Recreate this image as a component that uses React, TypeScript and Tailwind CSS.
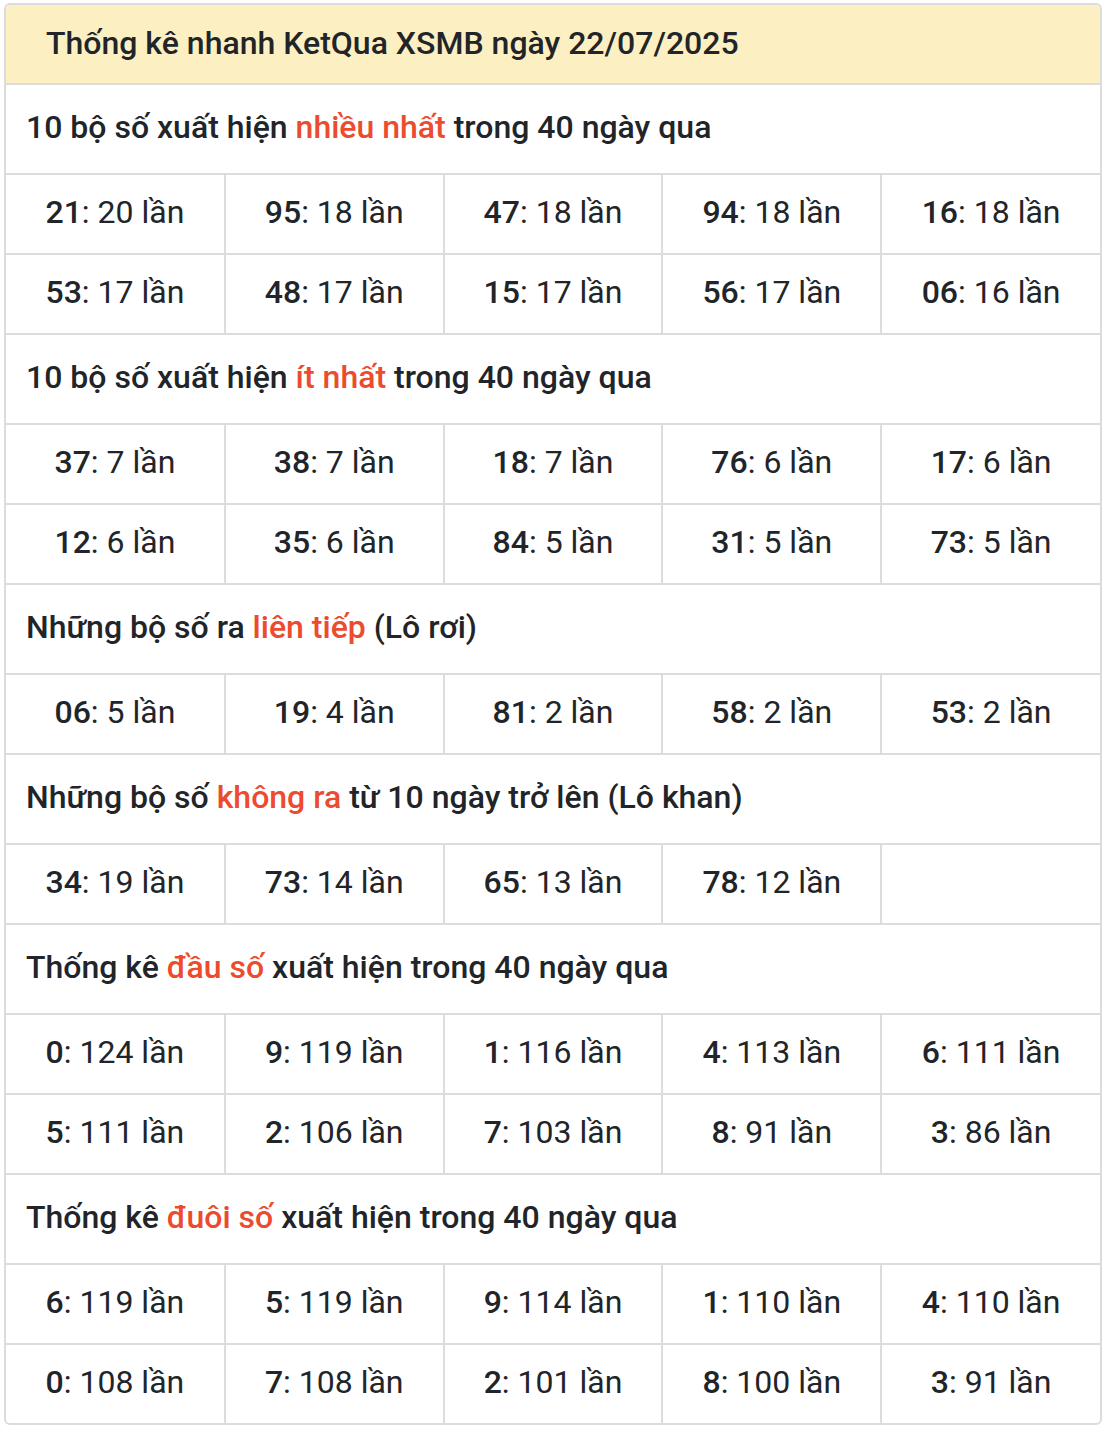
const font = { fontFamily: "Roboto, 'Noto Sans', sans-serif" };

type Sec = { pre: string; hl: string; post: string; rows: string[][] };

const sections: Sec[] = [
  {
    pre: "10 bộ số xuất hiện ",
    hl: "nhiều nhất",
    post: " trong 40 ngày qua",
    rows: [
      ["21:20", "95:18", "47:18", "94:18", "16:18"],
      ["53:17", "48:17", "15:17", "56:17", "06:16"],
    ],
  },
  {
    pre: "10 bộ số xuất hiện ",
    hl: "ít nhất",
    post: " trong 40 ngày qua",
    rows: [
      ["37:7", "38:7", "18:7", "76:6", "17:6"],
      ["12:6", "35:6", "84:5", "31:5", "73:5"],
    ],
  },
  {
    pre: "Những bộ số ra ",
    hl: "liên tiếp",
    post: " (Lô rơi)",
    rows: [["06:5", "19:4", "81:2", "58:2", "53:2"]],
  },
  {
    pre: "Những bộ số ",
    hl: "không ra",
    post: " từ 10 ngày trở lên (Lô khan)",
    rows: [["34:19", "73:14", "65:13", "78:12", ""]],
  },
  {
    pre: "Thống kê ",
    hl: "đầu số",
    post: " xuất hiện trong 40 ngày qua",
    rows: [
      ["0:124", "9:119", "1:116", "4:113", "6:111"],
      ["5:111", "2:106", "7:103", "8:91", "3:86"],
    ],
  },
  {
    pre: "Thống kê ",
    hl: "đuôi số",
    post: " xuất hiện trong 40 ngày qua",
    rows: [
      ["6:119", "5:119", "9:114", "1:110", "4:110"],
      ["0:108", "7:108", "2:101", "8:100", "3:91"],
    ],
  },
];

function Cell({ v }: { v: string }) {
  const [k, n] = v.split(":");
  return (
    <td className="h-[80px] w-1/5 border-2 border-[#dcdcdc] first:border-l-0 last:border-r-0 text-center text-[32px] text-[#212529] p-0 pb-[4px]">
      {v && (
        <>
          <span className="font-medium">{k}</span>: {n} lần
        </>
      )}
    </td>
  );
}

export default function App() {
  return (
    <div className="bg-white min-h-[1430px] pt-[3px] px-[4px]" style={font}>
      <div className="rounded-[6px] border-2 border-[#dcdcdc] overflow-hidden">
        <div className="h-[78px] bg-[#fcf0c2] flex items-center pl-[40px] pb-[2px] text-[32px] font-medium text-[#212529]">
          Thống kê nhanh KetQua XSMB ngày 22/07/2025
        </div>
        <table className="w-full border-collapse table-fixed -mb-[2px]">
          <tbody>
            {sections.map((s, i) => (
              <>
                <tr key={"t" + i}>
                  <td
                    colSpan={5}
                    className="h-[90px] border-2 border-[#dcdcdc] border-l-0 border-r-0 pl-[20px] pb-[4px] text-[32px] font-medium text-[#212529]"
                  >
                    {s.pre}
                    <span className="text-[#ec4b2e]">{s.hl}</span>
                    {s.post}
                  </td>
                </tr>
                {s.rows.map((r, j) => (
                  <tr key={"r" + i + j}>
                    {r.map((v, c) => (
                      <Cell key={c} v={v} />
                    ))}
                  </tr>
                ))}
              </>
            ))}
          </tbody>
        </table>
      </div>
    </div>
  );
}
